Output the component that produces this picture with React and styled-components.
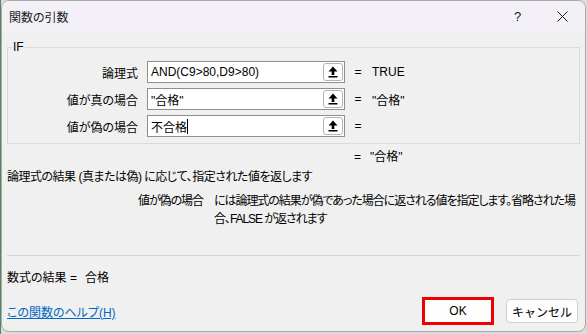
import React from 'react';
import styled, { createGlobalStyle } from 'styled-components';

const GlobalStyle = createGlobalStyle`
  body {
    margin: 0;
    background: #dcdcdc;
    font-family: "Liberation Sans", "Noto Sans CJK JP", sans-serif;
  }
`;

const Stage = styled.div`
  width: 587px;
  height: 334px;
  padding-left: 1px;
  box-sizing: border-box;
  background: #dcdcdc;
  border-left: 1px solid #4f8a5f;
`;

const Window = styled.div`
  width: 585px;
  height: 332px;
  margin-left: -1px;
  box-sizing: border-box;
  border: 1px solid #a9a9a9;
  border-radius: 8px;
  overflow: hidden;
  background: #f0f0f0;
  display: flex;
  flex-direction: column;
  font-size: 12px;
  color: #000;
  font-feature-settings: "palt";
`;

const TitleBar = styled.div`
  height: 30px;
  flex-shrink: 0;
  display: flex;
  align-items: center;
  background: #f3f0f7;
  padding-left: 7px;
  color: #1a1a1a;
`;

const Title = styled.div`
  flex: 1;
  font-size: 12px;
`;

const TitleButton = styled.div`
  width: 45px;
  height: 30px;
  display: flex;
  align-items: center;
  justify-content: center;
  font-size: 13px;
  color: #1a1a1a;
`;

const Body = styled.div`
  flex: 1;
  padding: 0 5px;
  display: flex;
  flex-direction: column;
`;

const Group = styled.div`
  position: relative;
  margin-top: 16px;
  border: 1px solid #dadada;
  padding: 13px 0 6px;
  display: flex;
  flex-direction: column;
  gap: 5px;
`;

const Legend = styled.span`
  position: absolute;
  top: -9px;
  left: 4px;
  padding: 0 1px;
  background: #f0f0f0;
  line-height: 16px;
`;

const ArgRow = styled.div`
  display: grid;
  grid-template-columns: 130px 198px 8px auto;
  column-gap: 9px;
  align-items: center;
  height: 22px;
`;

const ArgLabel = styled.div`
  text-align: right;
`;

const Field = styled.div`
  height: 22px;
  box-sizing: border-box;
  border: 1px solid #8f8f8f;
  background: #fff;
  display: flex;
  align-items: center;
  padding: 0 1px 0 3px;
`;

const FieldText = styled.div`
  flex: 1;
  white-space: nowrap;
  display: flex;
  align-items: center;
`;

const Caret = styled.span`
  display: inline-block;
  width: 1px;
  height: 15px;
  background: #000;
`;

const PickButton = styled.div`
  width: 20px;
  height: 18px;
  box-sizing: border-box;
  border: 1px solid #b4b4b4;
  border-radius: 3px;
  background: #fff;
  display: flex;
  align-items: center;
  justify-content: center;
`;

const Equals = styled.div`
  text-align: center;
`;

const ArgValue = styled.div`
  padding-left: 1px;
  white-space: nowrap;
`;

const FormulaValue = styled.div`
  margin-top: 4px;
  line-height: 18px;
  padding-left: 347px;
  display: flex;
  gap: 9px;
`;

const Description = styled.div`
  margin-top: 2px;
  line-height: 18px;
  letter-spacing: -0.5px;
`;

const ArgHelp = styled.div`
  margin-top: 6px;
  display: grid;
  grid-template-columns: 196px 1fr;
  column-gap: 11px;
  line-height: 18px;
  letter-spacing: -1.05px;
`;

const ArgHelpName = styled.div`
  text-align: right;
`;

const Separator = styled.div`
  margin-top: 27px;
  height: 1px;
  background: #d6d6d6;
`;

const Result = styled.div`
  margin-top: 13px;
  line-height: 18px;
  display: flex;
  gap: 8px;
`;

const Footer = styled.div`
  margin-top: 10px;
  display: flex;
  align-items: center;
  padding-right: 2px;
`;

const HelpLink = styled.a`
  flex: 1;
  color: #0067c0;
  text-decoration: underline;
  cursor: pointer;
`;

const Button = styled.button`
  width: 72px;
  height: ${p => (p.$primary ? 28 : 24)}px;
  box-sizing: border-box;
  margin-left: ${p => (p.$primary ? 0 : 12)}px;
  border: ${p => (p.$primary ? '3px solid #ee0000' : '1px solid #cfcfcf')};
  border-radius: ${p => (p.$primary ? 0 : 4)}px;
  background: #fdfdfd;
  font-family: inherit;
  font-size: 12px;
  color: #000;
  padding: 0;
`;

const UpArrow = () => (
  <svg width="10" height="12" viewBox="0 0 10 12">
    <path d="M5 0.5 L9.5 5.5 H6.3 V9 H3.7 V5.5 H0.5 Z" fill="#000" />
    <rect x="0.5" y="10" width="9" height="1.5" fill="#000" />
  </svg>
);

const CloseIcon = () => (
  <svg width="11" height="11" viewBox="0 0 11 11">
    <path d="M0.5 0.5 L10.5 10.5 M10.5 0.5 L0.5 10.5" stroke="#1a1a1a" strokeWidth="1" />
  </svg>
);

const args = [
  { label: '論理式', text: 'AND(C9>80,D9>80)', value: 'TRUE' },
  { label: '値が真の場合', text: '"合格"', value: '"合格"' },
  { label: '値が偽の場合', text: '不合格', value: '', focused: true },
];

export default function App() {
  return (
    <Stage>
      <GlobalStyle />
      <Window>
        <TitleBar>
          <Title>関数の引数</Title>
          <TitleButton>?</TitleButton>
          <TitleButton><CloseIcon /></TitleButton>
        </TitleBar>
        <Body>
          <Group>
            <Legend>IF</Legend>
            {args.map(a => (
              <ArgRow key={a.label}>
                <ArgLabel>{a.label}</ArgLabel>
                <Field>
                  <FieldText>
                    {a.text}
                    {a.focused && <Caret />}
                  </FieldText>
                  <PickButton><UpArrow /></PickButton>
                </Field>
                <Equals>=</Equals>
                <ArgValue>{a.value}</ArgValue>
              </ArgRow>
            ))}
          </Group>
          <FormulaValue>
            <span>=</span>
            <span>"合格"</span>
          </FormulaValue>
          <Description>論理式の結果 (真または偽) に応じて、指定された値を返します</Description>
          <ArgHelp>
            <ArgHelpName>値が偽の場合</ArgHelpName>
            <div>には論理式の結果が偽であった場合に返される値を指定します。省略された場合、FALSE が返されます</div>
          </ArgHelp>
          <Separator />
          <Result>
            <span>数式の結果 =</span>
            <span>合格</span>
          </Result>
          <Footer>
            <HelpLink>この関数のヘルプ(H)</HelpLink>
            <Button $primary>OK</Button>
            <Button>キャンセル</Button>
          </Footer>
        </Body>
      </Window>
    </Stage>
  );
}
